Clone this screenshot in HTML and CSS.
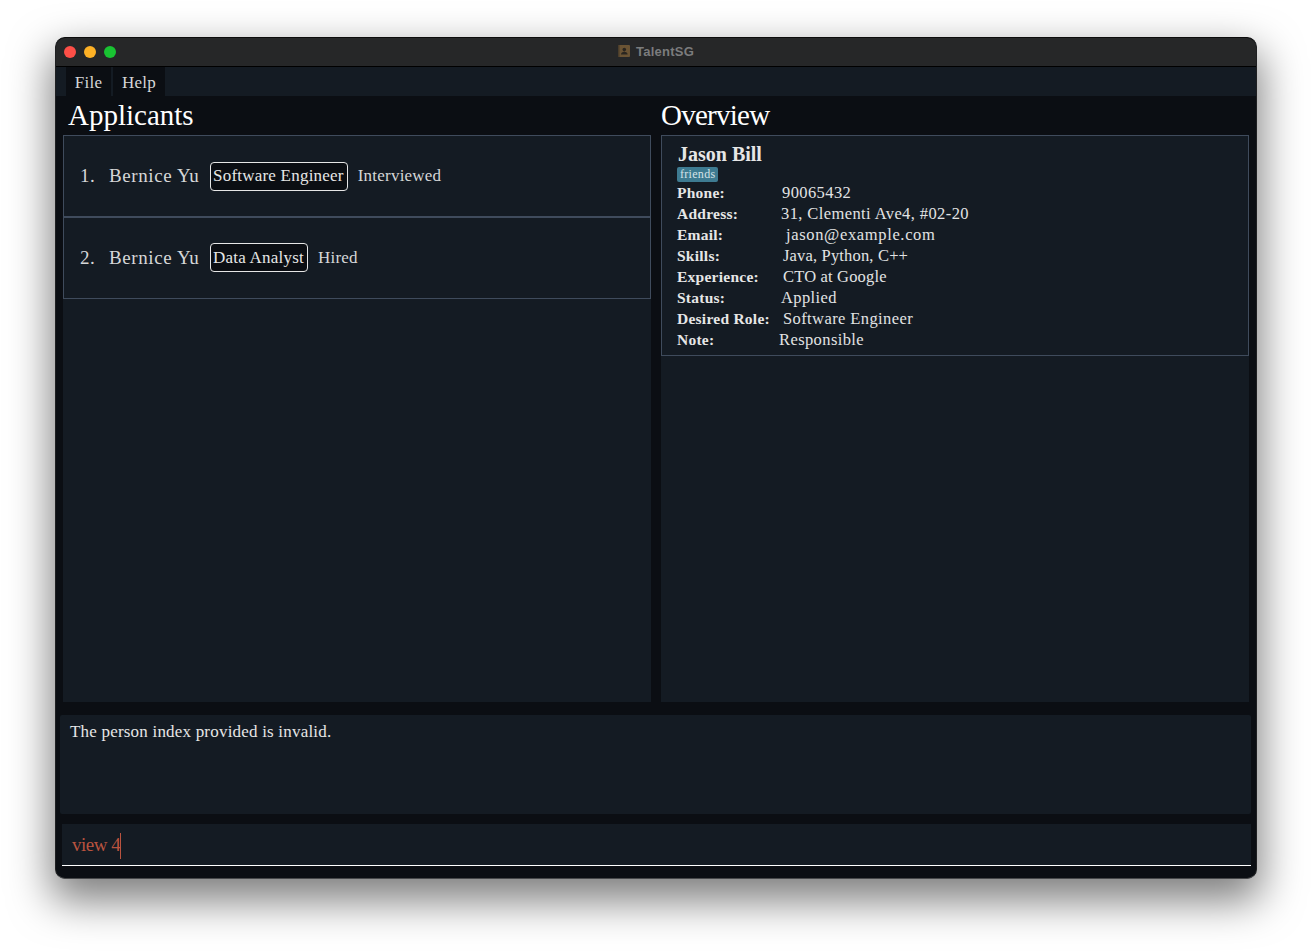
FILE: index.html
```html
<!DOCTYPE html>
<html lang="en">
<head>
<meta charset="utf-8">
<title>TalentSG</title>
<link rel="stylesheet" href="styles.css">
</head>
<body>
<div class="window">
  <header class="titlebar">
    <div class="lights"><span class="light red"></span><span class="light amber"></span><span class="light green"></span></div>
    <div class="title">
      <svg class="app-icon" width="12" height="12" viewBox="0 0 12 12" aria-hidden="true">
        <rect x="0" y="0" width="12" height="12" rx="1" fill="#6b5434"/>
        <rect x="0" y="0" width="1.5" height="12" fill="#4a3d2b"/>
        <circle cx="6.3" cy="4.6" r="1.8" fill="#2a2620"/>
        <path d="M3 9.6c0-2 1.5-2.8 3.3-2.8s3.3.8 3.3 2.8z" fill="#2a2620"/>
      </svg>
      <span class="title-text">TalentSG</span>
    </div>
  </header>
  <nav class="menubar">
    <span class="menu-item file">File</span>
    <span class="menu-item help">Help</span>
  </nav>
  <main class="content">
    <div class="columns">
      <section class="column">
        <h2 class="heading applicants">Applicants</h2>
        <div class="panel">
          <div class="app-card first">
            <span class="index">1.</span><span class="name">Bernice Yu</span><span class="role">Software Engineer</span><span class="state">Interviewed</span>
          </div>
          <div class="app-card second">
            <span class="index">2.</span><span class="name">Bernice Yu</span><span class="role">Data Analyst</span><span class="state">Hired</span>
          </div>
        </div>
      </section>
      <section class="column">
        <h2 class="heading overview">Overview</h2>
        <div class="panel">
          <div class="detail">
            <div class="person">Jason Bill</div>
            <div class="tags"><span class="tag">friends</span></div>
            <div class="row"><b class="label">Phone:</b><span class="v3">90065432</span></div>
            <div class="row"><b class="label">Address:</b><span class="v2">31, Clementi Ave4, #02-20</span></div>
            <div class="row"><b class="label">Email:</b><span class="v7">jason@example.com</span></div>
            <div class="row"><b class="label">Skills:</b><span class="v4 tight">Java, Python, C++</span></div>
            <div class="row"><b class="label">Experience:</b><span class="v4 tight">CTO at Google</span></div>
            <div class="row"><b class="label">Status:</b><span class="v2">Applied</span></div>
            <div class="row"><b class="label">Desired Role:</b><span class="v4">Software Engineer</span></div>
            <div class="row"><b class="label">Note:</b><span class="v0">Responsible</span></div>
          </div>
        </div>
      </section>
    </div>
    <div class="result">The person index provided is invalid.</div>
    <div class="command"><span class="command-text">view 4</span></div>
  </main>
</div>
</body>
</html>
```
FILE: styles.css
```css
* { box-sizing: border-box; }
html, body { margin: 0; height: 952px; overflow: hidden; background: #fff; }
body {
  padding: 37px 55px 73px 55px;
  font-family: "Liberation Serif", "DejaVu Serif", serif;
}
.window {
  height: 842px;
  display: flex;
  flex-direction: column;
  border-radius: 10px;
  overflow: hidden;
  background: #0b0e13;
  border: 1px solid #1f2022;
  border-top-color: #0c0c0c;
  border-bottom-color: #47484a;
  box-shadow: 0 18px 42px 4px rgba(0,0,0,.5);
}
.titlebar {
  height: 29px;
  flex: none;
  display: flex;
  align-items: center;
  justify-content: center;
  position: relative;
  background: #262728;
  border-bottom: 1px solid #000;
}
.lights { position: absolute; left: 8px; top: 8px; display: flex; gap: 8px; }
.light { width: 12px; height: 12px; border-radius: 50%; }
.red { background: #fe4f47; }
.amber { background: #fdb125; }
.green { background: #19c332; }
.title { display: flex; align-items: center; gap: 6px; margin-bottom: 2px; }
.app-icon { display: block; }
.title-text { font: bold 13px "Liberation Sans", Arial, sans-serif; letter-spacing: .25px; color: #7b7c7d; }
.menubar {
  height: 29px;
  flex: none;
  display: flex;
  gap: 2px;
  padding-left: 10px;
  background: #141b23;
}
.menu-item {
  display: flex;
  align-items: center;
  justify-content: center;
  padding-top: 2px;
  background: #0b0e13;
  color: #d6d7d8;
  font-size: 17px;
  letter-spacing: .3px;
}
.file { width: 45px; }
.help { width: 52px; }
.content { flex: 1; display: flex; flex-direction: column; padding: 0 5px 12px 4px; min-height: 0; }
.columns { display: grid; grid-template-columns: 588px 588px; gap: 10px; padding: 0 2px 0 3px; height: 606px; flex: none; }
.column { display: flex; flex-direction: column; min-height: 0; }
.heading {
  margin: 0;
  height: 39px;
  padding-top: 3px;
  font-size: 29px;
  line-height: 33px;
  font-weight: normal;
  color: #fff;
}
.applicants { padding-left: 5px; }
.overview { padding-left: 0; letter-spacing: -.75px; }
.panel { flex: 1; background: #141b23; min-height: 0; }
.app-card {
  height: 83px;
  display: flex;
  align-items: center;
  padding-left: 16px;
  border: 1px solid #3f4b5c;
  color: #d6d7d8;
  font-size: 19px;
}
.app-card.first { border-bottom-width: 2px; }
.app-card.second { border-top: 0; height: 81px; padding-bottom: 1px; }
.index { width: 29px; letter-spacing: .5px; }
.name { width: 101px; letter-spacing: .6px; }
.role {
  height: 29px;
  display: flex;
  align-items: center;
  padding: 0 3px 0 2px;
  border: 1px solid #e6e6e6;
  border-radius: 4px;
  background: #0b0e13;
  font-size: 17px;
  letter-spacing: .22px;
  color: #e6e6e6;
}
.state { margin-left: 10px; font-size: 17px; letter-spacing: .22px; }
.detail {
  height: 221px;
  padding: 6px 0 0 15px;
  border: 1px solid #3f4b5c;
  color: #e2e3e4;
  font-size: 16.5px;
  line-height: 21px;
}
.person { padding-left: 1px; font-size: 20px; line-height: 24px; font-weight: bold; color: #e6e6e6; }
.tags { height: 16px; padding-top: 1px; display: flex; }
.tag {
  height: 15px;
  padding: 0 3px;
  border-radius: 2px;
  background: #3e7b91;
  color: #d6e3e8;
  font-size: 12px;
  line-height: 15px;
  letter-spacing: .3px;
}
.row { display: flex; letter-spacing: .4px; white-space: nowrap; }
.label { width: 102px; flex: none; font-size: 15.5px; letter-spacing: .25px; color: #e6e6e6; }
.v0 { margin-left: 0; }
.v2 { margin-left: 2px; }
.v3 { margin-left: 3px; }
.v4 { margin-left: 4px; }
.v7 { margin-left: 7px; letter-spacing: .65px; }
.tight { letter-spacing: .17px; }
.result {
  height: 100px;
  margin-top: 13px;
  padding: 6px 10px;
  border-radius: 2px;
  background: #141b23;
  color: #e6e6e6;
  font-size: 17px;
  line-height: 21px;
  letter-spacing: .2px;
}
.command {
  height: 42px;
  margin: 10px 0 0 2px;
  padding: 9px 0 0 10px;
  background: #141b23;
  border-bottom: 1px solid #fff;
  font-size: 19px;
  line-height: 24px;
}
.command-text {
  display: inline-block;
  height: 26px;
  letter-spacing: -.5px;
  color: #b9533f;
  border-right: 1px solid #b9533f;
}
```
